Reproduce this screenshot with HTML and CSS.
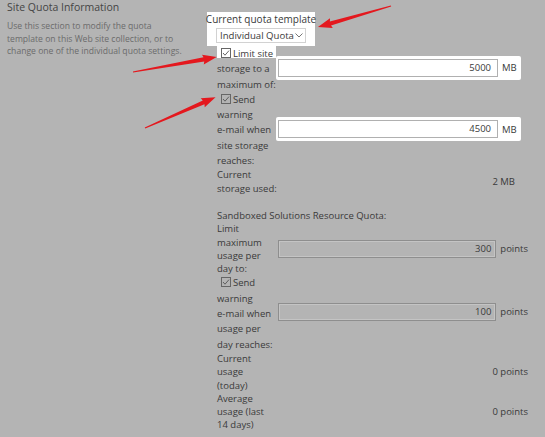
FILE: index.html
```html
<!DOCTYPE html>
<html>
<head>
<meta charset="utf-8">
<link rel="stylesheet" href="styles.css">
</head>
<body>
<div class="page">
  <div class="info">
    <div class="info-title">Site Quota Information</div>
    <div class="info-desc">Use this section to modify the quota<br>template on this Web site collection, or to<br>change one of the individual quota settings.</div>
  </div>
  <div class="form">
    <div class="template">
      <div class="template-label">Current quota template</div>
      <div class="select"><span>Individual Quota</span><svg class="chev" width="8" height="5" viewBox="0 0 8 5"><polyline points="0.5,0.5 4,4 7.5,0.5" fill="none" stroke="#666" stroke-width="0.9"/></svg></div>
    </div>

    <div class="row row-check">
      <div class="label">
        <div class="line hl-line"><svg class="cb" width="10" height="10" viewBox="0 0 10 10"><rect x="0.5" y="0.5" width="9" height="9" fill="none" stroke="#666"/><polyline points="2,5 4,7.2 8,2.6" fill="none" stroke="#555" stroke-width="0.9"/></svg>Limit site</div>
        <div class="line">storage to a</div>
        <div class="line">maximum of:</div>
      </div>
      <div class="value hl-box">
        <span class="input">5000</span><span class="unit">MB</span>
      </div>
    </div>

    <div class="row row-check">
      <div class="label">
        <div class="line"><svg class="cb" width="10" height="10" viewBox="0 0 10 10"><rect x="0.5" y="0.5" width="9" height="9" fill="none" stroke="#666"/><polyline points="2,5 4,7.2 8,2.6" fill="none" stroke="#555" stroke-width="0.9"/></svg>Send</div>
        <div class="line">warning</div>
        <div class="line">e-mail when</div>
        <div class="line">site storage</div>
        <div class="line">reaches:</div>
      </div>
      <div class="value hl-box">
        <span class="input">4500</span><span class="unit">MB</span>
      </div>
    </div>

    <div class="row">
      <div class="label">
        <div class="line">Current</div>
        <div class="line">storage used:</div>
      </div>
      <div class="value text-value text-mb">2 MB</div>
    </div>

    <div class="section-title">Sandboxed Solutions Resource Quota:</div>

    <div class="row">
      <div class="label">
        <div class="line">Limit</div>
        <div class="line">maximum</div>
        <div class="line">usage per</div>
        <div class="line">day to:</div>
      </div>
      <div class="value">
        <span class="input disabled">300</span><span class="unit">points</span>
      </div>
    </div>

    <div class="row row-check">
      <div class="label">
        <div class="line"><svg class="cb" width="10" height="10" viewBox="0 0 10 10"><rect x="0.5" y="0.5" width="9" height="9" fill="none" stroke="#666"/><polyline points="2,5 4,7.2 8,2.6" fill="none" stroke="#555" stroke-width="0.9"/></svg>Send</div>
        <div class="line">warning</div>
        <div class="line">e-mail when</div>
        <div class="line">usage per</div>
        <div class="line">day reaches:</div>
      </div>
      <div class="value value-up">
        <span class="input disabled">100</span><span class="unit">points</span>
      </div>
    </div>

    <div class="row">
      <div class="label">
        <div class="line">Current</div>
        <div class="line">usage</div>
        <div class="line">(today)</div>
      </div>
      <div class="value text-value">0 points</div>
    </div>

    <div class="row">
      <div class="label">
        <div class="line">Average</div>
        <div class="line">usage (last</div>
        <div class="line">14 days)</div>
      </div>
      <div class="value text-value">0 points</div>
    </div>
  </div>

  <svg class="arrows" width="545" height="437" viewBox="0 0 545 437">
    <g fill="#e4181e">
      <polygon transform="translate(391,6) rotate(163.95)" points="0,-0.6 63,-2.1 62,-5 76,0 62,5 63,2.1 0,0.6"/>
      <polygon transform="translate(133,72) rotate(-10.1)" points="0,-0.6 72,-2.1 71,-5 85,0 71,5 72,2.1 0,0.6"/>
      <polygon transform="translate(145,128) rotate(-23.6)" points="0,-0.6 64,-2.1 63,-5 77,0 63,5 64,2.1 0,0.6"/>
    </g>
  </svg>
</div>
</body>
</html>
```

FILE: styles.css
```css
html, body {
  margin: 0;
  padding: 0;
  background: #b4b4b4;
}

body {
  font-family: "Open Sans", "Noto Sans", sans-serif;
  color: #3a3a3a;
  width: 545px;
  height: 437px;
  overflow: hidden;
}

.page {
  position: relative;
  display: flex;
  align-items: flex-start;
  width: 545px;
  height: 437px;
}

.info {
  width: 200px;
  padding-left: 7px;
}

.info-title {
  font-size: 10.5px;
  line-height: 14px;
  color: #454545;
}

.info-desc {
  margin-top: 6px;
  font-size: 8.6px;
  line-height: 12.5px;
  color: #6b6b6b;
  white-space: nowrap;
}

.form {
  display: flex;
  flex-direction: column;
  margin-top: 12px;
  width: 330px;
}

.template {
  width: 108px;
  height: 34px;
  background: #fff;
  display: flex;
  flex-direction: column;
  align-items: center;
}

.template-label {
  font-size: 10px;
  line-height: 14px;
  white-space: nowrap;
  color: #3a3a3a;
}

.select {
  margin-top: 2px;
  width: 90px;
  height: 15px;
  box-sizing: border-box;
  border: 1px solid #d2d2d2;
  font-size: 9.6px;
  line-height: 13px;
  padding-left: 3px;
  padding-right: 2px;
  display: flex;
  align-items: center;
  justify-content: space-between;
  color: #3a3a3a;
  white-space: nowrap;
}

.chev {
  display: block;
}

.row {
  display: flex;
  align-items: center;
  padding-left: 10px;
}

.label {
  width: 59px;
  flex: none;
  font-size: 9.5px;
  white-space: nowrap;
}

.line {
  height: 13.3px;
  line-height: 13.3px;
}

.row-check .line {
  height: 15.3px;
  line-height: 15.3px;
}

.hl-line {
  background: linear-gradient(#fff 0 12px, transparent 12px);
}

.cb {
  display: inline-block;
  vertical-align: -1px;
  margin-left: 4px;
  margin-right: 2px;
}

.value {
  width: 252px;
  display: flex;
  align-items: center;
  font-size: 9.5px;
  padding-left: 2px;
  box-sizing: border-box;
}

.hl-box {
  background: #fff;
  height: 24px;
  width: 245px;
  border-radius: 2px;
  margin-bottom: 2px;
}

.value-up {
  margin-bottom: 4px;
}

.input {
  width: 220px;
  height: 18px;
  box-sizing: border-box;
  border: 1px solid #b0b0b0;
  text-align: right;
  padding-right: 6px;
  line-height: 16px;
  font-size: 9.5px;
  color: #3a3a3a;
}

.input.disabled {
  border: 1px solid #8e8e8e;
  box-shadow: inset 0 0 0 1px #c4c4c4;
  padding-right: 4px;
}

.unit {
  margin-left: 4px;
}

.text-value {
  justify-content: flex-end;
}

.text-mb {
  padding-right: 13px;
}

.section-title {
  margin-top: 14px;
  padding-left: 10px;
  font-size: 9.5px;
  line-height: 13.3px;
  white-space: nowrap;
}

.arrows {
  position: absolute;
  left: 0;
  top: 0;
  pointer-events: none;
}
```
